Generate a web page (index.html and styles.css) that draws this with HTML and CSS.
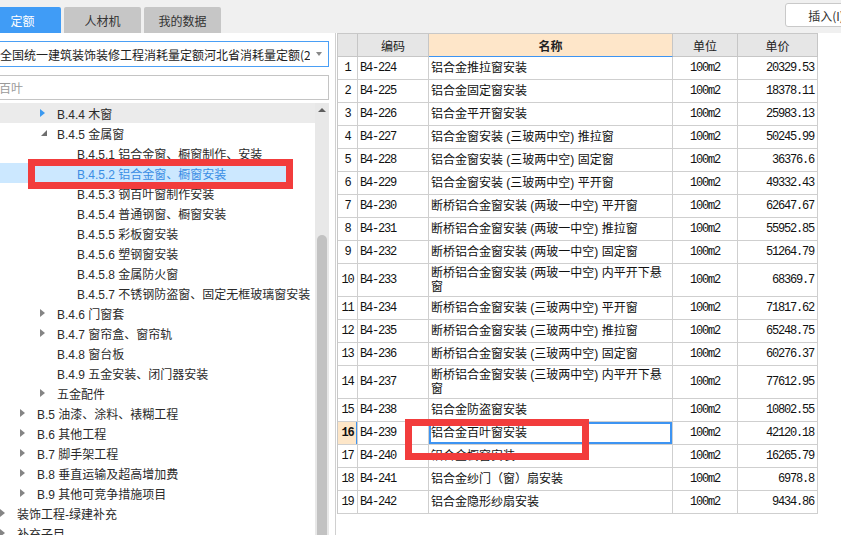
FILE: index.html
```html
<!DOCTYPE html>
<html lang="zh-CN">
<head>
<meta charset="utf-8">
<title>定额</title>
<link rel="stylesheet" href="styles.css">
</head>
<body>
<div class="app">
  <div class="topbar">
    <div class="tabs">
      <div class="tab active">定额</div>
      <div class="tab">人材机</div>
      <div class="tab">我的数据</div>
    </div>
    <div class="btn">插入(I)</div>
  </div>
  <div class="main">
    <div class="left">
      <div class="combo">
        <span class="combo-text">全国统一建筑装饰装修工程消耗量定额河北省消耗量定额(2012)</span>
        <span class="combo-arrow"><i class="down"></i></span>
      </div>
      <div class="search">百叶</div>
      <div class="tree-wrap">
        <div class="tree">
          <div class="row l2 hover"><span class="tw"><i class="ar blue"></i></span>B.4.4 木窗</div>
          <div class="row l2"><span class="tw"><i class="ex"></i></span>B.4.5 金属窗</div>
          <div class="row l3"><span class="tw"></span>B.4.5.1 铝合金窗、橱窗制作、安装</div>
          <div class="row l3 sel"><span class="tw"></span>B.4.5.2 铝合金窗、橱窗安装</div>
          <div class="row l3"><span class="tw"></span>B.4.5.3 钢百叶窗制作安装</div>
          <div class="row l3"><span class="tw"></span>B.4.5.4 普通钢窗、橱窗安装</div>
          <div class="row l3"><span class="tw"></span>B.4.5.5 彩板窗安装</div>
          <div class="row l3"><span class="tw"></span>B.4.5.6 塑钢窗安装</div>
          <div class="row l3"><span class="tw"></span>B.4.5.8 金属防火窗</div>
          <div class="row l3"><span class="tw"></span>B.4.5.7 不锈钢防盗窗、固定无框玻璃窗安装</div>
          <div class="row l2"><span class="tw"><i class="ar"></i></span>B.4.6 门窗套</div>
          <div class="row l2"><span class="tw"><i class="ar"></i></span>B.4.7 窗帘盒、窗帘轨</div>
          <div class="row l2"><span class="tw"></span>B.4.8 窗台板</div>
          <div class="row l2"><span class="tw"></span>B.4.9 五金安装、闭门器安装</div>
          <div class="row l2"><span class="tw"><i class="ar"></i></span>五金配件</div>
          <div class="row l1"><span class="tw"><i class="ar"></i></span>B.5 油漆、涂料、裱糊工程</div>
          <div class="row l1"><span class="tw"><i class="ar"></i></span>B.6 其他工程</div>
          <div class="row l1"><span class="tw"><i class="ar"></i></span>B.7 脚手架工程</div>
          <div class="row l1"><span class="tw"><i class="ar"></i></span>B.8 垂直运输及超高增加费</div>
          <div class="row l1"><span class="tw"><i class="ar"></i></span>B.9 其他可竞争措施项目</div>
          <div class="row l0"><span class="tw"><i class="ar"></i></span>装饰工程-绿建补充</div>
          <div class="row l0"><span class="tw"><i class="ar"></i></span>补充子目</div>
        </div>
        <div class="scroll">
          <i class="up"></i>
          <div class="thumb"></div>
        </div>
      </div>
    </div>
    <div class="right">
      <div class="grid">
        <div class="r h">
          <div class="c"></div>
          <div class="c">编码</div>
          <div class="c cur">名称</div>
          <div class="c">单位</div>
          <div class="c">单价</div>
        </div>
        <div class="r"><div class="c n">1</div><div class="c code">B4-224</div><div class="c name">铝合金推拉窗安装</div><div class="c unit">100m2</div><div class="c price">20329.53</div></div>
        <div class="r"><div class="c n">2</div><div class="c code">B4-225</div><div class="c name">铝合金固定窗安装</div><div class="c unit">100m2</div><div class="c price">18378.11</div></div>
        <div class="r"><div class="c n">3</div><div class="c code">B4-226</div><div class="c name">铝合金平开窗安装</div><div class="c unit">100m2</div><div class="c price">25983.13</div></div>
        <div class="r"><div class="c n">4</div><div class="c code">B4-227</div><div class="c name">铝合金窗安装 (三玻两中空) 推拉窗</div><div class="c unit">100m2</div><div class="c price">50245.99</div></div>
        <div class="r"><div class="c n">5</div><div class="c code">B4-228</div><div class="c name">铝合金窗安装 (三玻两中空) 固定窗</div><div class="c unit">100m2</div><div class="c price">36376.6</div></div>
        <div class="r"><div class="c n">6</div><div class="c code">B4-229</div><div class="c name">铝合金窗安装 (三玻两中空) 平开窗</div><div class="c unit">100m2</div><div class="c price">49332.43</div></div>
        <div class="r"><div class="c n">7</div><div class="c code">B4-230</div><div class="c name">断桥铝合金窗安装 (两玻一中空) 平开窗</div><div class="c unit">100m2</div><div class="c price">62647.67</div></div>
        <div class="r"><div class="c n">8</div><div class="c code">B4-231</div><div class="c name">断桥铝合金窗安装 (两玻一中空) 推拉窗</div><div class="c unit">100m2</div><div class="c price">55952.85</div></div>
        <div class="r"><div class="c n">9</div><div class="c code">B4-232</div><div class="c name">断桥铝合金窗安装 (两玻一中空) 固定窗</div><div class="c unit">100m2</div><div class="c price">51264.79</div></div>
        <div class="r tall"><div class="c n">10</div><div class="c code">B4-233</div><div class="c name">断桥铝合金窗安装 (两玻一中空) 内平开下悬窗</div><div class="c unit">100m2</div><div class="c price">68369.7</div></div>
        <div class="r"><div class="c n">11</div><div class="c code">B4-234</div><div class="c name">断桥铝合金窗安装 (三玻两中空) 平开窗</div><div class="c unit">100m2</div><div class="c price">71817.62</div></div>
        <div class="r"><div class="c n">12</div><div class="c code">B4-235</div><div class="c name">断桥铝合金窗安装 (三玻两中空) 推拉窗</div><div class="c unit">100m2</div><div class="c price">65248.75</div></div>
        <div class="r"><div class="c n">13</div><div class="c code">B4-236</div><div class="c name">断桥铝合金窗安装 (三玻两中空) 固定窗</div><div class="c unit">100m2</div><div class="c price">60276.37</div></div>
        <div class="r tall"><div class="c n">14</div><div class="c code">B4-237</div><div class="c name">断桥铝合金窗安装 (三玻两中空) 内平开下悬窗</div><div class="c unit">100m2</div><div class="c price">77612.95</div></div>
        <div class="r"><div class="c n">15</div><div class="c code">B4-238</div><div class="c name">铝合金防盗窗安装</div><div class="c unit">100m2</div><div class="c price">10802.55</div></div>
        <div class="r cur-row"><div class="c n">16</div><div class="c code">B4-239</div><div class="c name">铝合金百叶窗安装</div><div class="c unit">100m2</div><div class="c price">42120.18</div></div>
        <div class="r"><div class="c n">17</div><div class="c code">B4-240</div><div class="c name">铝合金橱窗安装</div><div class="c unit">100m2</div><div class="c price">16265.79</div></div>
        <div class="r"><div class="c n">18</div><div class="c code">B4-241</div><div class="c name">铝合金纱门（窗）扇安装</div><div class="c unit">100m2</div><div class="c price">6978.8</div></div>
        <div class="r"><div class="c n">19</div><div class="c code">B4-242</div><div class="c name">铝合金隐形纱扇安装</div><div class="c unit">100m2</div><div class="c price">9434.86</div></div>
      </div>
    </div>
  </div>
  <div class="mark mark-tree"></div>
  <div class="mark mark-grid"></div>
</div>
</body>
</html>
```

FILE: styles.css
```css
html, body {
  margin: 0;
  padding: 0;
}
body {
  width: 841px;
  height: 535px;
  overflow: hidden;
  background: #f0f0f0;
  font-family: "Liberation Sans", "Noto Sans CJK SC", sans-serif;
  font-size: 12px;
  color: #333;
}
.app {
  position: relative;
  width: 841px;
  height: 535px;
  display: flex;
  flex-direction: column;
}
.topbar {
  height: 33px;
  flex: none;
  display: flex;
  justify-content: space-between;
  align-items: flex-start;
}
.tabs {
  display: flex;
  gap: 3px;
  margin-left: -16px;
  margin-top: 7px;
}
.tab {
  width: 77px;
  height: 26px;
  box-sizing: border-box;
  background: #c6c6c6;
  border-radius: 2px 2px 0 0;
  display: flex;
  align-items: center;
  justify-content: center;
  font-family: "Noto Sans CJK SC", sans-serif;
  font-size: 12px;
  color: #333;
}
.tab.active {
  background: #409cf6;
  color: #fff;
}
.btn {
  margin-top: 3px;
  margin-right: -26px;
  width: 82px;
  height: 24px;
  box-sizing: border-box;
  border: 1px solid #c9c9c9;
  border-radius: 3px;
  background: #fff;
  display: flex;
  align-items: center;
  justify-content: center;
  font-family: "Noto Sans CJK SC", sans-serif;
  font-size: 12px;
  color: #333;
}
.main {
  flex: 1;
  min-height: 0;
  display: flex;
  background: #fff;
}
.left {
  width: 336px;
  flex: none;
  box-sizing: border-box;
  border-right: 1px solid #d0d0d0;
  padding-top: 8px;
  padding-right: 6px;
  overflow: hidden;
  display: flex;
  flex-direction: column;
}
.combo {
  margin-left: -4px;
  width: 333px;
  height: 26px;
  flex: none;
  box-sizing: border-box;
  border: 1px solid #4a9ff5;
  display: flex;
  align-items: center;
  padding-left: 3px;
}
.combo-text {
  flex: 1;
  min-width: 0;
  overflow: hidden;
  white-space: nowrap;
  font-family: "Noto Sans CJK SC", sans-serif;
  color: #222;
}
.combo-arrow {
  width: 18px;
  flex: none;
  display: flex;
  justify-content: center;
}
.down {
  width: 0;
  height: 0;
  border-left: 3.5px solid transparent;
  border-right: 3.5px solid transparent;
  border-top: 4px solid #888;
}
.search {
  margin-top: 8px;
  margin-left: -4px;
  width: 333px;
  height: 25px;
  flex: none;
  box-sizing: border-box;
  border: 1px solid #c4c4c4;
  padding-left: 2px;
  display: flex;
  align-items: center;
  font-family: "Noto Sans CJK SC", sans-serif;
  color: #9a9a9a;
}
.tree-wrap {
  margin-top: 3px;
  flex: 1;
  min-height: 0;
  display: flex;
}
.tree {
  flex: 1;
  min-width: 0;
  overflow: hidden;
}
.row {
  height: 20px;
  display: flex;
  align-items: center;
  white-space: nowrap;
  color: #2a2a2a;
}
.row.l0 { padding-left: 0; }
.row.l1 { padding-left: 20px; }
.row.l2 { padding-left: 40px; }
.row.l3 { padding-left: 60px; }
.row.hover { background: #ebebeb; }
.row.sel {
  background: linear-gradient(to right, #cce8ff 287px, transparent 287px);
  color: #3a8de4;
}
.tw {
  width: 17px;
  flex: none;
  display: flex;
  align-items: center;
}
.ar {
  width: 0;
  height: 0;
  border-top: 4px solid transparent;
  border-bottom: 4px solid transparent;
  border-left: 5px solid #858585;
}
.ar.blue { border-left-color: #3b99f0; }
.ex {
  margin-left: 1px;
  width: 0;
  height: 0;
  border-top: 6px solid transparent;
  border-right: 6px solid #6e6e6e;
}
.scroll {
  width: 14px;
  flex: none;
  background: #e8e8e8;
  display: flex;
  flex-direction: column;
  align-items: center;
  padding-top: 5px;
  box-sizing: border-box;
}
.up {
  width: 0;
  height: 0;
  border-left: 4px solid transparent;
  border-right: 4px solid transparent;
  border-bottom: 4px solid #5e5e5e;
}
.thumb {
  margin-top: 123px;
  width: 10px;
  flex: 1;
  border-radius: 5px 5px 0 0;
  background: #c2c2c2;
}
.right {
  flex: 1;
  min-width: 0;
  background: #fff;
}
.grid {
  margin-left: 1px;
  width: 481px;
  box-sizing: border-box;
  border-left: 1px solid #c8c8c8;
  border-top: 1px solid #c8c8c8;
}
.r {
  display: grid;
  grid-template-columns: 20px 71px 244px 65px 80px;
  height: 23px;
}
.r.tall { height: 33px; }
.c {
  box-sizing: border-box;
  border-right: 1px solid #cfcfcf;
  border-bottom: 1px solid #cfcfcf;
  display: flex;
  align-items: center;
  padding: 0 2px;
  overflow: hidden;
  white-space: nowrap;
  color: #111;
}
.r.h .c {
  background: #e6e6e6;
  border-color: #c6c6c6;
  justify-content: center;
  font-family: "Noto Sans CJK SC", sans-serif;
  color: #222;
}
.r.h .c.cur {
  background: #fee6c9;
  font-weight: bold;
  border-bottom-color: #3d94f2;
}
.c.n, .c.code, .c.unit, .c.price {
  font-family: "Liberation Mono", monospace;
  font-size: 12px;
  letter-spacing: -1.2px;
  color: #111;
}
.c.n { justify-content: center; padding: 0; }
.c.unit { justify-content: center; }
.c.price { justify-content: flex-end; padding-right: 3px; }
.c.name {
  font-family: "Liberation Sans", "Noto Sans CJK SC", sans-serif;
  white-space: normal;
  line-height: 14px;
  color: #111;
}
.cur-row .c.n {
  background: #fde6c8;
  font-weight: bold;
  box-shadow: inset -1px 0 0 #3d94f2;
}
.cur-row .c.name {
  box-shadow: inset 0 0 0 2px #3d94f2;
}
.mark {
  position: absolute;
  box-sizing: border-box;
  border: 7px solid #f23c3c;
}
.mark-tree {
  left: 28px;
  top: 159px;
  width: 265px;
  height: 30px;
}
.mark-grid {
  left: 405px;
  top: 419px;
  width: 184px;
  height: 41px;
}
```
